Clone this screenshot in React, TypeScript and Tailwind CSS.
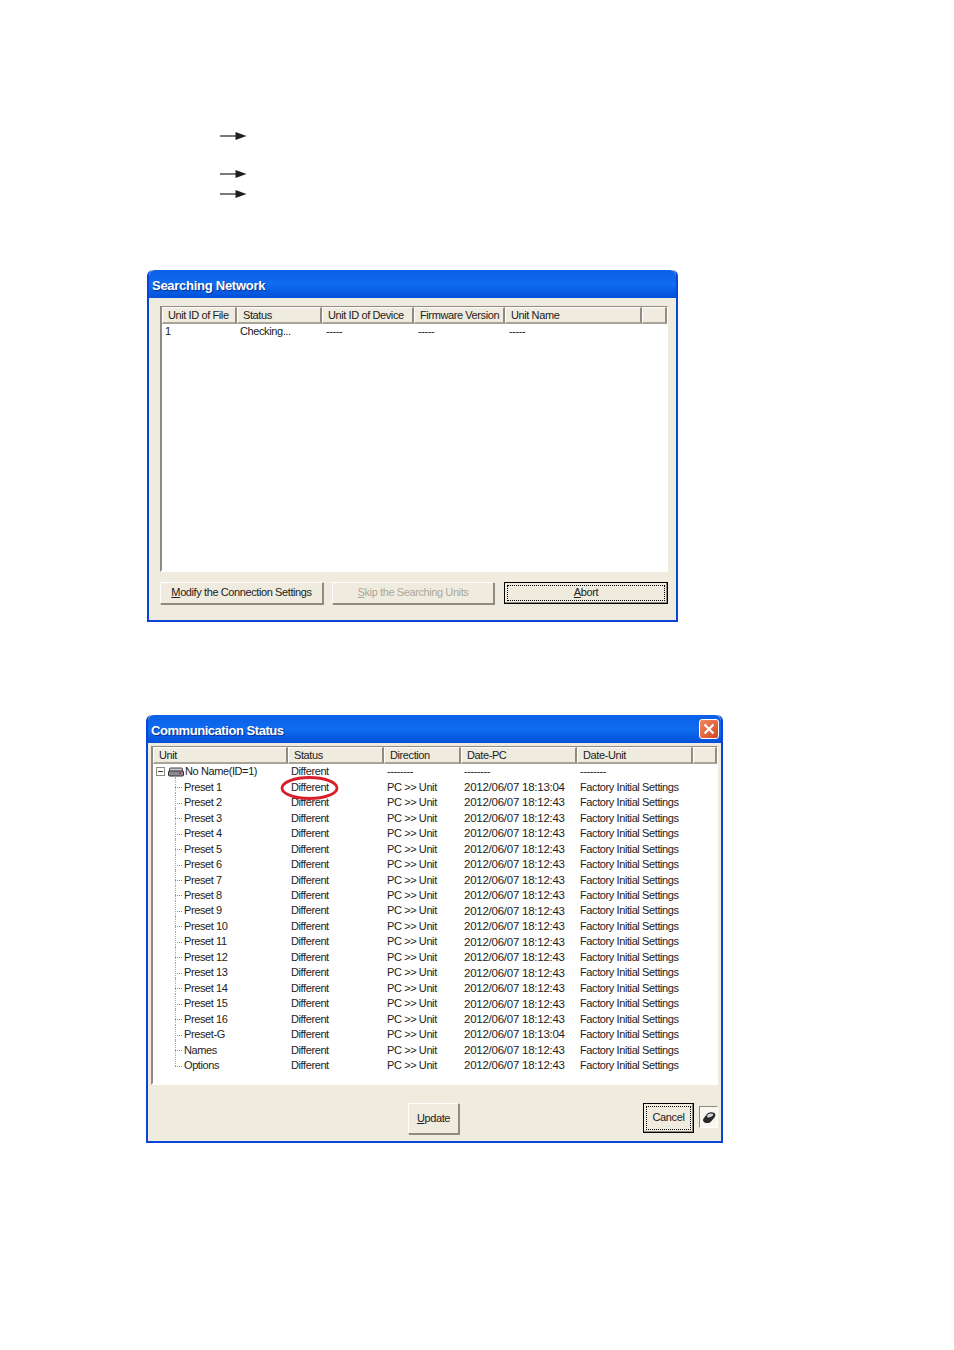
const font = "[font-family:'Liberation_Sans',Arial,sans-serif]";

// the screenshot's UI font is narrower than Arial, digits are not
const uiText = "text-[11px] leading-none tracking-[-0.4px] text-[#222]";
const dateText = "text-[11.5px] leading-none tracking-[-0.25px] text-[#222]";

type Col = { label: string; w: string; pad: string };

const searchCols: Col[] = [
  { label: "Unit ID of File", w: "w-[75px]", pad: "pl-[5px]" },
  { label: "Status", w: "w-[85px]", pad: "pl-[5px]" },
  { label: "Unit ID of Device", w: "w-[92px]", pad: "pl-[5px]" },
  { label: "Firmware Version", w: "w-[91px]", pad: "pl-[5px]" },
  { label: "Unit Name", w: "w-[137px]", pad: "pl-[5px]" },
  { label: "", w: "flex-1", pad: "" },
];

const statusCols: Col[] = [
  { label: "Unit", w: "w-[135px]", pad: "pl-[5px]" },
  { label: "Status", w: "w-[96px]", pad: "pl-[5px]" },
  { label: "Direction", w: "w-[77px]", pad: "pl-[5px]" },
  { label: "Date-PC", w: "w-[116px]", pad: "pl-[5px]" },
  { label: "Date-Unit", w: "w-[116px]", pad: "pl-[5px]" },
  { label: "", w: "flex-1", pad: "" },
];

const names = [
  "Preset 1", "Preset 2", "Preset 3", "Preset 4", "Preset 5", "Preset 6", "Preset 7",
  "Preset 8", "Preset 9", "Preset 10", "Preset 11", "Preset 12", "Preset 13", "Preset 14",
  "Preset 15", "Preset 16", "Preset-G", "Names", "Options",
];

function Arrow({ className }: { className: string }) {
  return (
    <svg width="27" height="8" viewBox="0 0 27 8" className={className}>
      <path d="M0 4H17" stroke="#231f20" strokeWidth="1.2" />
      <path d="M15.5 0L26.5 4L15.5 8Z" fill="#231f20" />
    </svg>
  );
}

function TitleBar({ title, tracking, close }: { title: string; tracking: string; close?: boolean }) {
  return (
    <div className="flex h-[28px] items-center justify-between rounded-t-[6px] bg-gradient-to-b from-[#0a5fe6] via-[#0f6cf0] to-[#0450d8] pl-[3px] pr-[2px]">
      <span className={`${tracking} pt-[3px] text-[13px] font-bold text-white [text-shadow:1px_1px_1px_#0a2f8f]`}>{title}</span>
      {close && (
        <div className="flex h-[20px] w-[20px] items-center justify-center rounded-[3px] border border-white bg-gradient-to-br from-[#ee8a62] to-[#d8431c]">
          <svg width="12" height="12" viewBox="0 0 12 12">
            <path d="M1.5 1.5L10.5 10.5M10.5 1.5L1.5 10.5" stroke="white" strokeWidth="2.2" />
          </svg>
        </div>
      )}
    </div>
  );
}

function Header({ cols }: { cols: Col[] }) {
  return (
    <div className="flex h-[17px] bg-[#efebde]">
      {cols.map((c, i) => (
        <div
          key={i}
          className={`${c.w} ${c.pad} ${uiText} flex items-center overflow-hidden whitespace-nowrap border-t border-l border-t-white border-l-white border-r-2 border-b-2 border-r-[#8f8b80] border-b-[#a8a498] pt-px`}
        >
          {c.label}
        </div>
      ))}
    </div>
  );
}

function Button({ children, w, h, variant }: { children: React.ReactNode; w: string; h: string; variant?: "default" | "disabled" }) {
  if (variant === "default") {
    return (
      <div className={`${w} ${h} border border-black bg-[#efebde] p-[2px] shadow-[inset_-1px_-1px_0_#8f8b80]`}>
        <div className={`${uiText} flex h-full items-center justify-center border border-dotted border-black pb-px`}>
          {children}
        </div>
      </div>
    );
  }
  return (
    <div
      className={`${w} ${h} ${uiText} flex items-center justify-center border border-t-white border-l-white border-r-[#8f8b80] border-b-[#8f8b80] bg-[#efebde] pb-px shadow-[1px_1px_0_#8f8b80] ${variant === "disabled" ? "text-[#aca899]" : ""}`}
    >
      {children}
    </div>
  );
}

function SearchDialog() {
  return (
    <div className="ml-[147px] w-[531px] rounded-t-[6px] border-b-2 border-x-2 border-[#0a45d8] bg-[#efebde]">
      <TitleBar title="Searching Network" tracking="tracking-[-0.27px]" />
      <div className="pl-[11px] pr-[8px] pt-[8px]">
        <div className="h-[266px] border-t border-l-2 border-r border-b-2 border-t-[#8f8b80] border-l-[#8f8b80] border-r-white border-b-white bg-white">
          <Header cols={searchCols} />
          <div className={`${uiText} flex h-[15px] items-center`}>
            <span className="w-[78px] pl-[3px]">1</span>
            <span className="w-[86px]">Checking...</span>
            <span className="w-[92px]">-----</span>
            <span className="w-[91px]">-----</span>
            <span>-----</span>
          </div>
        </div>
        <div className="flex pt-[10px] pb-[16px]">
          <Button w="w-[163px]" h="h-[22px]"><span><u>M</u>odify the Connection Settings</span></Button>
          <div className="ml-[9px]">
            <Button w="w-[162px]" h="h-[22px]" variant="disabled"><span><u>S</u>kip the Searching Units</span></Button>
          </div>
          <div className="ml-[10px]">
            <Button w="w-[164px]" h="h-[22px]" variant="default"><span><u>A</u>bort</span></Button>
          </div>
        </div>
      </div>
    </div>
  );
}

function Row({ name, last, time }: { name: string; last?: boolean; time: string }) {
  return (
    <div className={`${uiText} relative flex h-[15.47px] items-center`}>
      <div className="relative w-[138px] pl-[31px]">
        <span className="absolute left-[22px] top-1/2 w-[7px] border-t border-dotted border-[#8f8b80]" />
        <span className={`absolute left-[22px] -top-[5px] border-l border-dotted border-[#a8a498] ${last ? "h-[11px]" : "h-[16px]"}`} />
        {name}
      </div>
      <div className="w-[96px]">Different</div>
      <div className="w-[77px]">PC &gt;&gt; Unit</div>
      <div className={`${dateText} w-[116px] pt-px`}>{time}</div>
      <div>Factory Initial Settings</div>
    </div>
  );
}

function StatusDialog() {
  return (
    <div className="ml-[146px] w-[577px] rounded-t-[6px] border-b-2 border-x-2 border-[#0a45d8] bg-[#efebde]">
      <TitleBar title="Communication Status" tracking="tracking-[-0.45px]" close />
      <div className="px-[3px] pt-[3px]">
        <div className="h-[339px] border-t border-l-2 border-r border-b-2 border-t-[#8f8b80] border-l-[#8f8b80] border-r-white border-b-white bg-white">
          <Header cols={statusCols} />
          <div className="relative">
            {/* tree root */}
            <div className={`${uiText} relative flex h-[15.47px] items-center`}>
              <div className="flex w-[138px] items-center pl-[3px]">
                <span className="flex h-[9px] w-[9px] items-center justify-center border border-[#8f8b80] bg-white">
                  <span className="h-px w-[5px] bg-[#333]" />
                </span>
                <svg width="16" height="10" viewBox="0 0 16 10" className="ml-[3px] mr-px">
                  <rect x="1.5" y="1" width="13" height="4" rx="1" fill="#c8c8cc" stroke="#444" />
                  <rect x="0.5" y="4" width="15" height="5" rx="1" fill="#8a8a92" stroke="#333" />
                  <rect x="11" y="5.5" width="2" height="1.5" fill="#e02020" />
                </svg>
                No Name(ID=1)
              </div>
              <div className="w-[96px]">Different</div>
              <div className="w-[77px]">--------</div>
              <div className="w-[116px]">--------</div>
              <div>--------</div>
            </div>
            {names.map((n, i) => (
              <Row
                key={n}
                name={n}
                last={i === names.length - 1}
                time={n === "Preset 1" || n === "Preset-G" ? "2012/06/07 18:13:04" : "2012/06/07 18:12:43"}
              />
            ))}
            {/* red callout round the first status cell */}
            <svg width="59" height="26" viewBox="0 0 59 26" className="absolute left-[127px] top-[11px]">
              <ellipse cx="29.5" cy="13" rx="27.5" ry="10.5" fill="none" stroke="#d8202c" strokeWidth="2.8" />
            </svg>
          </div>
        </div>
        <div className="flex h-[56px] items-start pt-[18px]">
          <div className="ml-[257px]">
            <Button w="w-[51px]" h="h-[31px]"><span><u>U</u>pdate</span></Button>
          </div>
          <div className="ml-[184px]">
            <Button w="w-[51px]" h="h-[30px]" variant="default">Cancel</Button>
          </div>
          <div className="ml-[5px] mt-[3px] flex h-[22px] w-[21px] items-center justify-center border border-t-[#8f8b80] border-l-[#8f8b80] border-r-white border-b-white bg-[#f8f6f0]">
            <svg width="14" height="13" viewBox="0 0 14 13">
              <path d="M1.5 7.5L5 3C6.5 1 10.5 0.5 12.5 2C13.8 3.2 13.5 5 12.5 6.5L9 10.5C7.5 12.3 4 12.5 2.2 11.2C0.8 10.2 0.8 8.6 1.5 7.5Z" fill="#2a2a2a" />
              <path d="M5 4.5C6.5 2.5 10 2 11.5 3.2C11 5 8 7 5.5 6.5Z" fill="#d4d4d4" />
            </svg>
          </div>
        </div>
      </div>
    </div>
  );
}

export default function App() {
  return (
    <div className={`${font} min-h-[1350px] w-[954px] bg-white pt-[132px]`}>
      <div className="ml-[220px] flex w-[27px] flex-col">
        <Arrow className="block" />
        <Arrow className="mt-[30px] block" />
        <Arrow className="mt-[12px] block" />
      </div>
      <div className="mt-[72px]">
        <SearchDialog />
      </div>
      <div className="mt-[93px]">
        <StatusDialog />
      </div>
    </div>
  );
}
